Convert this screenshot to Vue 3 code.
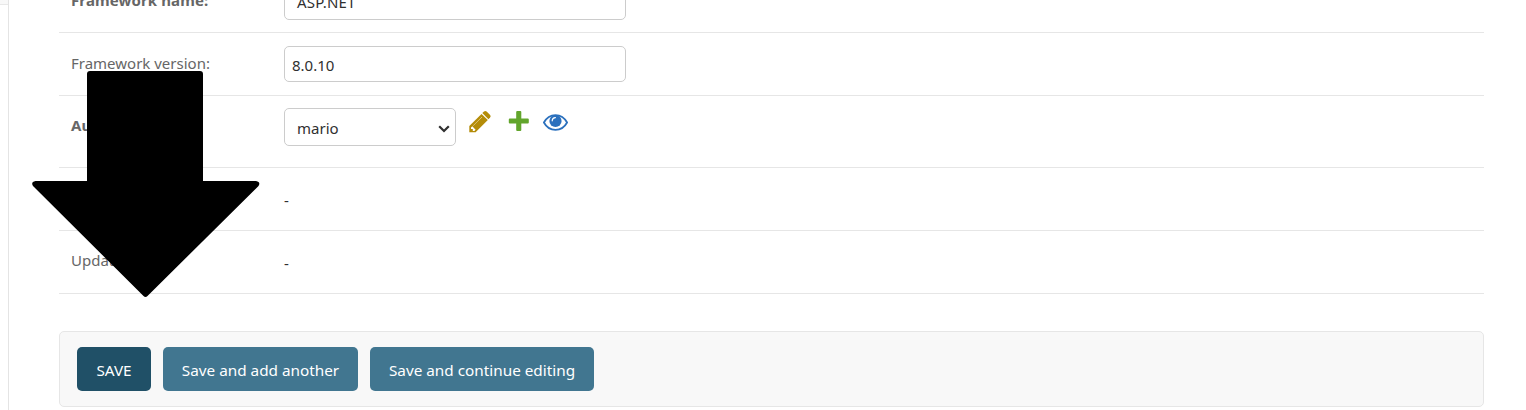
<script setup>
const buttons = [
  { text: 'SAVE', kind: 'save' },
  { text: 'Save and add another', kind: 'another' },
  { text: 'Save and continue editing', kind: 'continue' },
]
</script>

<template>
  <div class="page">
    <aside class="rail"><div class="rail-row"></div></aside>
    <main class="content">
      <div class="row first">
        <label class="label bold name">Framework name:</label>
        <div class="input indented asp">ASP.NET</div>
      </div>
      <div class="row">
        <label class="label">Framework version:</label>
        <div class="input">8.0.10</div>
      </div>
      <div class="row author">
        <label class="label bold">Author:</label>
        <div class="select">
          <span>mario</span>
          <svg class="chevron" width="12" height="8" viewBox="0 0 12 8"><path d="M1.2 1.200 6 6l4.800-4.800" fill="none" stroke="#303030" stroke-width="2.200" /></svg>
        </div>
        <svg class="pencil" width="24" height="24" viewBox="0 0 24 24">
          <g fill="#b48c08">
            <path d="M1.300 22.300V16.100L13.500 3.900l6.300 6.200L7.600 22.300z" />
            <path d="M14.300 3.100l1.700-1.600q1.300-1.200 2.600 0l3.500 3.400q1.200 1.300 0 2.600l-1.600 1.700z" />
          </g>
          <path d="M5.200 15.700 14 7" stroke="#dfc77a" stroke-width=".9" fill="none" />
          <path d="M3 17.500v1.600h1.800V21h1.600l1.200-1.200-3.300-3.500z" fill="#fff" />
        </svg>
        <svg class="plus" width="20" height="20" viewBox="0 0 20 20">
          <path d="M8.200 0h3.100q1 0 1 1v6.500h6.500q1 0 1 1v3q0 1-1 1h-6.500V19q0 1-1 1H8.200q-1 0-1-1v-6.500H.8q-1 0-1-1v-3q0-1 1-1h6.400V1q0-1 1-1z" fill="#62a52c" />
        </svg>
        <svg class="eye" width="25" height="17" viewBox="0 0 25 17">
          <path d="M.9 8.500C6.200-1.500 18.800-1.500 24.100 8.500 18.800 18.300 6.200 18.300.9 8.500z" fill="#fff" stroke="#2b70bd" stroke-width="1.750" />
          <circle cx="12.500" cy="7" r="6.100" fill="#2b70bd" />
          <path d="M9.200 6.800a3.300 3.300 0 0 1 3.200-3.200" fill="none" stroke="#fff" stroke-width="1.200" stroke-linecap="round" />
        </svg>
      </div>
      <div class="row">
        <label class="label low">Created:</label>
        <div class="readonly">-</div>
      </div>
      <div class="row">
        <label class="label low">Updated:</label>
        <div class="readonly">-</div>
      </div>
      <div class="submit">
        <button v-for="b in buttons" :key="b.kind" class="btn" :class="b.kind">{{ b.text }}</button>
      </div>
    </main>
    <svg class="arrow" width="228" height="228" viewBox="0 0 228 228">
      <path d="M58 1H168q3 0 3 3V111H224q5 1 2.500 5L115.500 226q-2 2-4 0L1 116q-2.500-4 2.500-5H55V4q0-3 3-3z" />
    </svg>
  </div>
</template>

<style>
body { overflow: hidden; background: #fff; }
</style>

<style scoped>
.page {
  position: relative;
  display: flex;
  width: 1526px;
  height: 410px;
  overflow: hidden;
  background: #fff;
  color: #303030;
  font: 15px/20px "Noto Sans", "Open Sans", sans-serif;
}
.page * { box-sizing: border-box; }
.rail { flex: none; width: 9px; border-right: 1px solid #e4e4e4; }
.rail-row { height: 5px; background: #f8f8f8; border-bottom: 1px solid #e8e8e8; }
.content { width: 1425px; margin-left: 50px; }
.row {
  display: flex;
  align-items: flex-start;
  height: 63px;
  padding: 13px 0 0 12px;
  border-bottom: 1px solid #e6e6e6;
}
.row.first { height: 33px; padding-top: 0; }
.row.author { height: 72px; padding-top: 12px; }
.label { flex: none; width: 213px; margin-top: 7px; color: #666; white-space: nowrap; }
.bold { font-weight: 700; }
.first .label { margin-top: -10px; }
.name { letter-spacing: 0.12px; }
.label.low { margin-top: 6px; }
.input {
  flex: none;
  width: 342px;
  height: 36px;
  padding: 8px 7px 0;
  border: 1px solid #ccc;
  border-radius: 5px;
  line-height: 20px;
}
.first .input { margin-top: -16px; padding-top: 7px; }
.input.indented { padding-left: 12px; }
.asp { letter-spacing: 0.25px; }
.select {
  display: flex;
  flex: none;
  justify-content: space-between;
  width: 172px;
  height: 38px;
  padding: 9px 5px 0 12px;
  border: 1px solid #ccc;
  border-radius: 5px;
}
.chevron { margin-top: 7px; }
.pencil { margin: 2px 0 0 12px; }
.plus { margin: 3px 0 0 17px; overflow: visible; }
.eye { margin: 6px 0 0 14px; }
.readonly { margin-top: 9px; }
.submit {
  display: flex;
  gap: 12px;
  height: 76px;
  margin-top: 37px;
  padding: 15px 17px;
  background: #f8f8f8;
  border: 1px solid #e6e6e6;
  border-radius: 5px;
}
.btn {
  flex: none;
  height: 44px;
  padding: 1px 0 0;
  border: 0;
  border-radius: 5px;
  background: #417690;
  color: #fff;
  font: inherit;
  font-size: 15.3px;
  white-space: nowrap;
}
.save { width: 74px; background: #205067; }
.another { width: 195px; }
.continue { width: 224px; }
.arrow { position: absolute; left: 32px; top: 70px; fill: #000; }
</style>
